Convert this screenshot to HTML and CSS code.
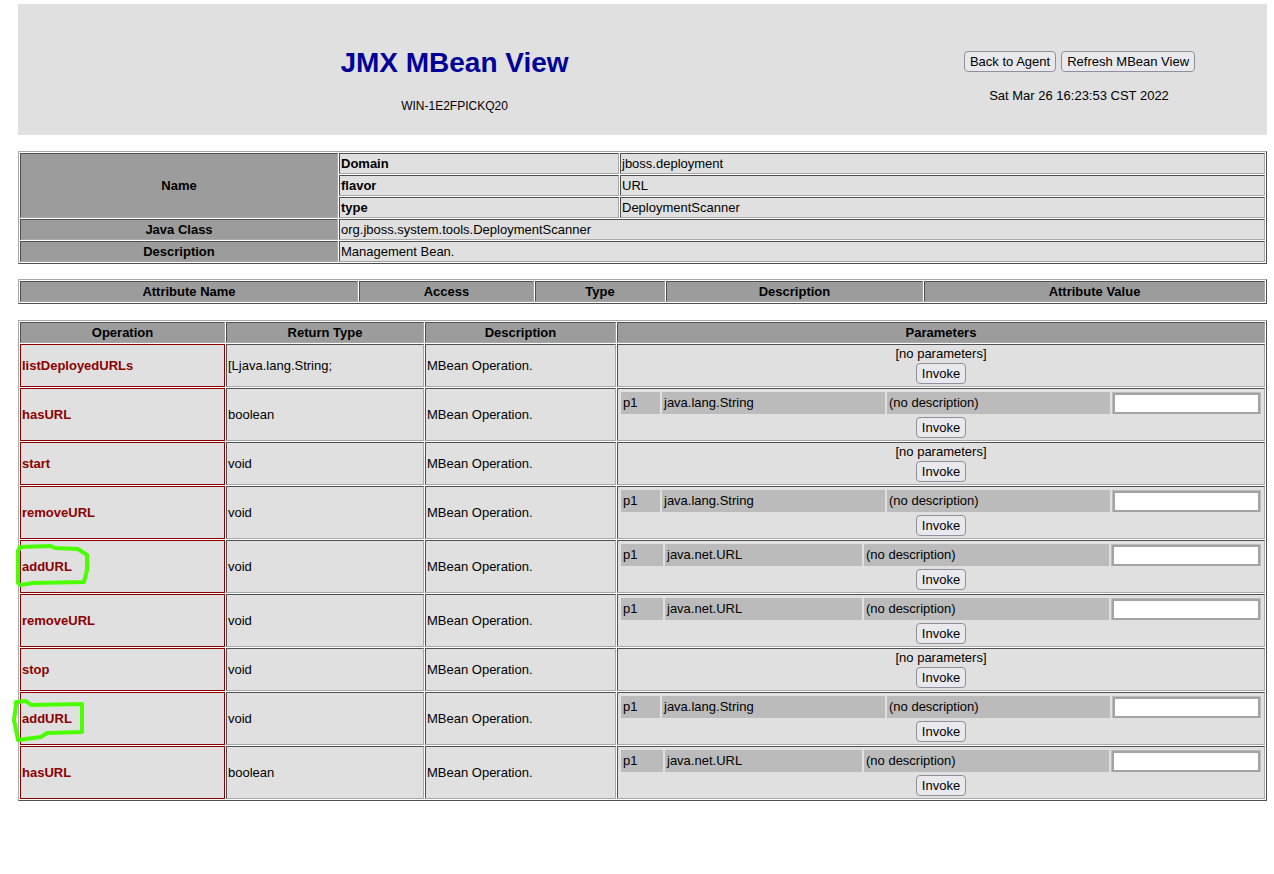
FILE: index.html
```html
<!DOCTYPE html>
<html>
<head>
<meta charset="utf-8">
<title>JMX MBean View</title>
<link rel="stylesheet" href="styles.css">
</head>
<body>
<div class="header">
  <div class="hd-left">
    <h1 class="title">JMX MBean View</h1>
    <div class="host">WIN-1E2FPICKQ20</div>
  </div>
  <div class="hd-right">
    <div class="btns"><button class="btn">Back to Agent</button><button class="btn">Refresh MBean View</button></div>
    <div class="date">Sat Mar 26 16:23:53 CST 2022</div>
  </div>
</div>

<table class="grid name-tbl">
  <colgroup><col class="nc1"><col class="nc2"><col></colgroup>
  <tr><td class="dark center bold" rowspan="3">Name</td><td class="bold">Domain</td><td>jboss.deployment</td></tr>
  <tr><td class="bold">flavor</td><td>URL</td></tr>
  <tr><td class="bold">type</td><td>DeploymentScanner</td></tr>
  <tr><td class="dark center bold">Java Class</td><td colspan="2">org.jboss.system.tools.DeploymentScanner</td></tr>
  <tr><td class="dark center bold">Description</td><td colspan="2">Management Bean.</td></tr>
</table>

<table class="grid attr-tbl">
  <colgroup><col class="ac1"><col class="ac2"><col class="ac3"><col class="ac4"><col></colgroup>
  <tr><td class="dark center bold">Attribute Name</td><td class="dark center bold">Access</td><td class="dark center bold">Type</td><td class="dark center bold">Description</td><td class="dark center bold">Attribute Value</td></tr>
</table>

<table class="grid ops-tbl">
  <colgroup><col class="oc1"><col class="oc2"><col class="oc3"><col></colgroup>
  <tr><td class="dark center bold">Operation</td><td class="dark center bold">Return Type</td><td class="dark center bold">Description</td><td class="dark center bold">Parameters</td></tr>

  <tr><td class="op">listDeployedURLs</td><td>[Ljava.lang.String;</td><td>MBean Operation.</td>
    <td class="params"><div class="noparam">[no parameters]</div><div class="invoke-row"><button class="btn">Invoke</button></div></td></tr>

  <tr><td class="op">hasURL</td><td>boolean</td><td>MBean Operation.</td>
    <td class="params"><table class="ptbl str"><tr><td class="pc p1">p1</td><td class="pc ptype">java.lang.String</td><td class="pc pdesc">(no description)</td><td class="pc pin"><input class="field" type="text"></td></tr></table><div class="invoke-row"><button class="btn">Invoke</button></div></td></tr>

  <tr><td class="op">start</td><td>void</td><td>MBean Operation.</td>
    <td class="params"><div class="noparam">[no parameters]</div><div class="invoke-row"><button class="btn">Invoke</button></div></td></tr>

  <tr><td class="op">removeURL</td><td>void</td><td>MBean Operation.</td>
    <td class="params"><table class="ptbl str"><tr><td class="pc p1">p1</td><td class="pc ptype">java.lang.String</td><td class="pc pdesc">(no description)</td><td class="pc pin"><input class="field" type="text"></td></tr></table><div class="invoke-row"><button class="btn">Invoke</button></div></td></tr>

  <tr><td class="op">addURL</td><td>void</td><td>MBean Operation.</td>
    <td class="params"><table class="ptbl url"><tr><td class="pc p1">p1</td><td class="pc ptype">java.net.URL</td><td class="pc pdesc">(no description)</td><td class="pc pin"><input class="field" type="text"></td></tr></table><div class="invoke-row"><button class="btn">Invoke</button></div></td></tr>

  <tr><td class="op">removeURL</td><td>void</td><td>MBean Operation.</td>
    <td class="params"><table class="ptbl url"><tr><td class="pc p1">p1</td><td class="pc ptype">java.net.URL</td><td class="pc pdesc">(no description)</td><td class="pc pin"><input class="field" type="text"></td></tr></table><div class="invoke-row"><button class="btn">Invoke</button></div></td></tr>

  <tr><td class="op">stop</td><td>void</td><td>MBean Operation.</td>
    <td class="params"><div class="noparam">[no parameters]</div><div class="invoke-row"><button class="btn">Invoke</button></div></td></tr>

  <tr><td class="op">addURL</td><td>void</td><td>MBean Operation.</td>
    <td class="params"><table class="ptbl str"><tr><td class="pc p1">p1</td><td class="pc ptype">java.lang.String</td><td class="pc pdesc">(no description)</td><td class="pc pin"><input class="field" type="text"></td></tr></table><div class="invoke-row"><button class="btn">Invoke</button></div></td></tr>

  <tr><td class="op">hasURL</td><td>boolean</td><td>MBean Operation.</td>
    <td class="params"><table class="ptbl url"><tr><td class="pc p1">p1</td><td class="pc ptype">java.net.URL</td><td class="pc pdesc">(no description)</td><td class="pc pin"><input class="field" type="text"></td></tr></table><div class="invoke-row"><button class="btn">Invoke</button></div></td></tr>
</table>

<svg class="annot" width="1274" height="874" viewBox="0 0 1274 874" xmlns="http://www.w3.org/2000/svg">
  <polyline points="18,583 18,551 20,547 51,546 55,548 78,549 87,555 87,570 84,582 33,583 20,585" fill="none" stroke="#4cff00" stroke-width="4" stroke-linejoin="round" stroke-linecap="round"/>
  <polyline points="16,705 16,702 26,701 31,705 82,704 82,732 47,733 41,737 18,740 14,720 16,705" fill="none" stroke="#4cff00" stroke-width="4" stroke-linejoin="round" stroke-linecap="round"/>
</svg>
</body>
</html>
```

FILE: styles.css
```css
html { background: #ffffff; }
body {
  margin: 4px 7px 8px 18px;
  font-family: "Liberation Sans", Arial, sans-serif;
  font-size: 13px;
  line-height: 16px;
  color: #000000;
}

/* header */
.header {
  display: grid;
  grid-template-columns: 873px 1fr;
  background: #e0e0e0;
  height: 131px;
}
.hd-left {
  display: flex;
  flex-direction: column;
  align-items: center;
  padding-top: 43px;
}
.title {
  margin: 0;
  font-size: 28px;
  line-height: 32px;
  font-weight: bold;
  color: #000099;
}
.host {
  margin-top: 20px;
  font-size: 12px;
  line-height: 14px;
}
.hd-right {
  display: flex;
  flex-direction: column;
  align-items: center;
  padding-top: 47px;
}
.btns {
  display: flex;
  gap: 5px;
  padding-left: 1px;
}
.date {
  margin-top: 16px;
  font-size: 13px;
  line-height: 15px;
}

.btn {
  font-family: "Liberation Sans", Arial, sans-serif;
  font-size: 13px;
  line-height: 15px;
  height: 21px;
  padding: 1px 5px;
  border: 1px solid #8f8f9d;
  border-radius: 4px;
  background: #e9e9ed;
  color: #000000;
  margin: 0;
}

/* tables */
.grid {
  width: 100%;
  border-collapse: separate;
  border-spacing: 1px;
  border: 1px solid;
  border-color: #a8a8a8 #505050 #505050 #a8a8a8;
  table-layout: fixed;
}
.grid > tbody > tr > td {
  border: 1px solid;
  border-color: #505050 #a8a8a8 #a8a8a8 #505050;
  padding: 1px;
  line-height: 17px;
  background: #e0e0e0;
  vertical-align: middle;
  white-space: nowrap;
}
.grid > tbody > tr > td.dark { background: #9c9c9c; }
.center { text-align: center; }
.bold { font-weight: bold; }

.name-tbl { margin-top: 16px; }
.nc1 { width: 318px; }
.nc2 { width: 280px; }

.attr-tbl { margin-top: 15px; }
.ac1 { width: 338px; }
.ac2 { width: 175px; }
.ac3 { width: 130px; }
.ac4 { width: 257px; }

.ops-tbl { margin-top: 16px; }
.oc1 { width: 205px; }
.oc2 { width: 198px; }
.oc3 { width: 191px; }

.grid > tbody > tr > td.op {
  border: 1px solid #8b0000;
  color: #8b0000;
  font-weight: bold;
}
.grid > tbody > tr > td.params {
  text-align: center;
  line-height: 16px;
}
.noparam { line-height: 16px; }
.invoke-row {
  display: flex;
  justify-content: center;
  align-items: center;
  height: 23px;
}

/* parameter inner table */
.ptbl {
  width: 100%;
  table-layout: fixed;
  border-collapse: separate;
  border-spacing: 2px;
  text-align: left;
}
.ptbl td.pc {
  background: #bbbbbb;
  padding: 1px 2px;
  height: 20px;
  line-height: 16px;
  vertical-align: middle;
  white-space: nowrap;
}
.ptbl.str .p1 { width: 35px; }
.ptbl.str .ptype { width: 219px; }
.ptbl.str .pdesc { width: 219px; }
.ptbl.url .p1 { width: 38px; }
.ptbl.url .ptype { width: 193px; }
.ptbl.url .pdesc { width: 241px; }
.ptbl td.pin { padding: 0 1px; }
.field {
  display: block;
  box-sizing: border-box;
  width: 100%;
  height: 21px;
  margin: 0;
  border: 2px solid #a3a3a3;
  background: #ffffff;
  padding: 0 2px;
  font-family: "Liberation Sans", Arial, sans-serif;
  font-size: 13px;
}

.annot {
  position: absolute;
  left: 0;
  top: 0;
  pointer-events: none;
}
```
